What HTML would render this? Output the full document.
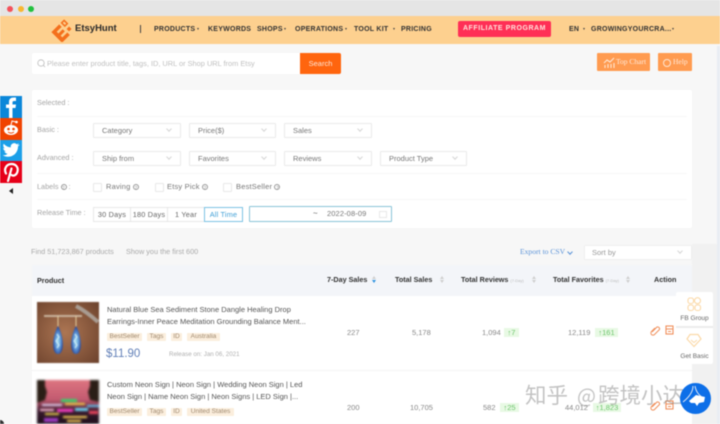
<!DOCTYPE html>
<html><head><meta charset="utf-8"><style>
html,body{margin:0;padding:0}
body{width:720px;height:424px;overflow:hidden;position:relative;background:#f7f7f7;font-family:"Liberation Sans","Noto Sans CJK SC",sans-serif;color:#666}
#w{position:absolute;left:0;top:0;width:720px;height:424px;overflow:hidden;filter:blur(.45px)}
.a{position:absolute;white-space:nowrap}
.n{font-size:7px;font-weight:700;color:#333;letter-spacing:.25px;top:25px;line-height:9px}
.k{position:absolute;top:28px;width:0;height:0;border-left:1.5px solid transparent;border-right:1.5px solid transparent;border-top:2px solid #444}
.s{position:absolute;background:#fff;border:1px solid #ebebeb;box-sizing:border-box;font-size:7.5px;color:#777;padding-left:8px;height:15px;line-height:13px;border-radius:1px}
.s:after{content:"";position:absolute;right:9px;top:3px;width:3px;height:3px;border-right:1px solid #d5d5d5;border-bottom:1px solid #d5d5d5;transform:rotate(45deg)}
.l{position:absolute;font-size:7.3px;color:#a5a5a5;left:37px;white-space:nowrap;line-height:10px}
.c{position:absolute;width:7px;height:7px;border:1px solid #e8e8e8;background:#fff;top:183px;border-radius:1px}
.t{font-size:7.5px;color:#777;top:182px;line-height:10px;letter-spacing:.2px}
.q{display:inline-block;box-sizing:border-box;width:6px;height:6px;border:.7px solid #999;border-radius:50%;font-size:4.5px;line-height:5px;text-align:center;color:#888;letter-spacing:0;vertical-align:0}
.b{position:absolute;top:207px;height:15px;box-sizing:border-box;border:1px solid #e8e8e8;background:#fff;font-size:7.3px;line-height:13px;text-align:center;color:#666;letter-spacing:.2px}
.h{font-size:7.2px;font-weight:700;color:#333;top:275px;line-height:10px}
.m{font-size:4px;color:#bbb;font-weight:400}
.p{font-size:7.5px;color:#555;left:107px;line-height:10px}
.g{position:absolute;height:8px;line-height:8px;background:#fbeedd;color:#a08a70;font-size:6.6px;text-align:center;border-radius:1px}
.v{font-size:7.5px;color:#888;line-height:10px}
.u{position:absolute;background:#e8f9e4;color:#6cc56c;font-size:7.5px;height:9px;line-height:9px;text-align:center}
.sort{position:absolute;width:4px;height:7px}
.sort:before,.sort:after{content:"";position:absolute;left:0;border-left:2px solid transparent;border-right:2px solid transparent}
.sort:before{top:0;border-bottom:3px solid #cfcfcf}
.sort:after{bottom:0;border-top:3px solid #cfcfcf}
</style></head><body><div id="w">

<div class="a" style="left:0;top:0;width:720px;height:16px;background:#e5e5e5"></div>
<div class="a" style="left:7px;top:6px;width:6px;height:6px;border-radius:50%;background:#f4515b"></div>
<div class="a" style="left:18px;top:6px;width:6px;height:6px;border-radius:50%;background:#f9b731"></div>
<div class="a" style="left:28px;top:6px;width:6px;height:6px;border-radius:50%;background:#22c13f"></div>

<div class="a" style="left:0;top:16px;width:720px;height:28px;background:#fdd08f"></div>
<svg class="a" style="left:49px;top:17px" width="26" height="25" viewBox="0 0 26 25">
<g transform="rotate(-45 13 13)" fill="#f4701c"><path d="M4 7h11v3.500H8v2.500h6v3h-6v2.500h7V22H4z"/><path d="M17 7h5v6h-5z M18.500 8.500v3h2v-3z" fill-rule="evenodd"/><rect x="17" y="15.500" width="3.500" height="3.500"/></g>
</svg>
<div class="a" style="left:75px;top:22px;font-size:9.5px;font-weight:700;color:#2b2b2b;line-height:14px">EtsyHunt</div>
<div class="a" style="left:140px;top:25px;width:1px;height:8px;background:#444"></div>
<div class="a n" style="left:154px">PRODUCTS</div><i class="k" style="left:197px"></i>
<div class="a n" style="left:208px">KEYWORDS</div>
<div class="a n" style="left:257px">SHOPS</div><i class="k" style="left:284px"></i>
<div class="a n" style="left:295px">OPERATIONS</div><i class="k" style="left:345px"></i>
<div class="a n" style="left:354px">TOOL KIT</div><i class="k" style="left:393px"></i>
<div class="a n" style="left:401px">PRICING</div>
<div class="a" style="left:458px;top:21px;width:93px;height:16px;background:#ff2f56;border-radius:2px;color:#ffe3dc;font-size:7px;font-weight:700;line-height:16px;text-align:center;letter-spacing:.55px">AFFILIATE PROGRAM</div>
<div class="a n" style="left:569px">EN</div><i class="k" style="left:583px"></i>
<div class="a n" style="left:591px">GROWINGYOURCRA...</div><i class="k" style="left:672px"></i>

<div class="a" style="left:32px;top:53px;width:268px;height:21px;background:#fff;border-radius:2px 0 0 2px"></div>
<svg class="a" style="left:36px;top:58px" width="10" height="10" viewBox="0 0 10 10"><circle cx="5" cy="5" r="3.2" fill="none" stroke="#bbb" stroke-width=".8"/><path d="M7.4 7.4L9 9" stroke="#bbb" stroke-width=".8"/></svg>
<div class="a" style="left:47px;top:59px;font-size:7.4px;color:#c0c0c0;line-height:10px">Please enter product title, tags, ID, URL or Shop URL from Etsy</div>
<div class="a" style="left:300px;top:53px;width:41px;height:21px;background:#ff650e;border-radius:0 2px 2px 0;color:#ffe7d8;font-size:7.5px;line-height:21px;text-align:center">Search</div>

<div class="a" style="left:597px;top:53px;width:53px;height:18px;background:#ff9b50;border-radius:1px;color:#ffeadb;font:7.5px/18px 'Liberation Serif',serif"><span style="position:absolute;left:19px">Top Chart</span></div>
<svg class="a" style="left:603px;top:57px" width="12" height="11" viewBox="0 0 12 11"><path d="M2 8v3M5 7v4M8 7v4M11 6v5M1 6l3-3 3 2 4-4" stroke="#ffe6d2" stroke-width="1.1" fill="none"/></svg>
<div class="a" style="left:658px;top:53px;width:34px;height:18px;background:#ff9b50;border-radius:1px;color:#ffeadb;font:7.5px/18px 'Liberation Serif',serif"><span style="position:absolute;left:15px">Help</span></div>
<div class="a" style="left:663px;top:59px;box-sizing:border-box;width:8px;height:8px;border:1px solid #ffe6d2;border-radius:50%"></div>

<div class="a" style="left:32px;top:90px;width:660px;height:138px;background:#fff;border-radius:2px"></div>
<div class="l" style="top:98px">Selected :</div>
<div class="l" style="top:125px">Basic :</div>
<div class="l" style="top:153px">Advanced :</div>
<div class="l" style="top:182px">Labels <span class="q">?</span> :</div>
<div class="l" style="top:208px">Release Time :</div>
<div class="a" style="left:37px;top:116px;width:650px;height:1px;background:#f7f7f7"></div>
<div class="a" style="left:37px;top:173px;width:650px;height:1px;background:#f7f7f7"></div>
<div class="a" style="left:37px;top:199px;width:650px;height:1px;background:#f7f7f7"></div>

<div class="s" style="left:93px;top:123px;width:88px">Category</div>
<div class="s" style="left:189px;top:123px;width:87px">Price($)</div>
<div class="s" style="left:284px;top:123px;width:88px">Sales</div>
<div class="s" style="left:93px;top:151px;width:88px">Ship from</div>
<div class="s" style="left:189px;top:151px;width:87px">Favorites</div>
<div class="s" style="left:284px;top:151px;width:88px">Reviews</div>
<div class="s" style="left:380px;top:151px;width:87px">Product Type</div>

<div class="c" style="left:93px"></div><div class="a t" style="left:106px">Raving <span class="q">?</span></div>
<div class="c" style="left:155px"></div><div class="a t" style="left:167px">Etsy Pick <span class="q">?</span></div>
<div class="c" style="left:223px"></div><div class="a t" style="left:236px">BestSeller <span class="q">?</span></div>

<div class="b" style="left:93px;width:38px">30 Days</div>
<div class="b" style="left:130px;width:38px">180 Days</div>
<div class="b" style="left:167px;width:38px">1 Year</div>
<div class="b" style="left:204px;width:39px;border-color:#7cc3e4;color:#3f9fd6">All Time</div>
<div class="a" style="left:249px;top:206px;width:143px;height:16px;box-sizing:border-box;border:1px solid #8ac4d8;border-radius:1px;background:#fff"></div>
<div class="a" style="left:313px;top:209px;font-size:8px;color:#666;line-height:10px">~</div>
<div class="a" style="left:327px;top:209px;font-size:7.5px;color:#777;line-height:10px;letter-spacing:.1px">2022-08-09</div>
<div class="a" style="left:379px;top:211px;width:6px;height:5px;border:1px solid #e8e8e8"></div>

<div class="a" style="left:31px;top:247px;font-size:7.3px;color:#aaa;line-height:10px">Find 51,723,867 products</div>
<div class="a" style="left:126px;top:247px;font-size:7.3px;color:#aaa;line-height:10px">Show you the first 600</div>
<div class="a" style="left:520px;top:247px;font:7.6px/10px 'Liberation Serif',serif;color:#5b93d8">Export to CSV</div>
<div class="a" style="left:568px;top:250px;width:3px;height:3px;border-right:1px solid #5b93d8;border-bottom:1px solid #5b93d8;transform:rotate(45deg)"></div>
<div class="s" style="left:584px;top:245px;width:108px;padding-left:7px;border-color:#efefef;color:#999">Sort by</div>

<div class="a" style="left:692px;top:244px;width:25px;height:180px;background:#f1f1f1"></div>
<div class="a" style="left:717px;top:46px;width:3px;height:378px;background:#e9edf3"></div>

<div class="a" style="left:32px;top:265px;width:660px;height:31px;background:#f3f5f9;border-radius:2px 2px 0 0"></div>
<div class="a" style="left:32px;top:296px;width:660px;height:128px;background:#fff"></div>
<div class="a" style="left:32px;top:370px;width:660px;height:1px;background:#f4f4f4"></div>
<div class="a h" style="left:37px;top:276px">Product</div>
<div class="a h" style="left:327px">7-Day Sales</div>
<div class="a" style="left:372px;top:276px;width:0;height:0;border-left:2px solid transparent;border-right:2px solid transparent;border-bottom:3px solid #cfcfcf"></div>
<div class="a" style="left:372px;top:280px;width:0;height:0;border-left:2px solid transparent;border-right:2px solid transparent;border-top:3px solid #2f94e0"></div>
<div class="a h" style="left:395px">Total Sales</div><div class="sort" style="left:440px;top:276px"></div>
<div class="a h" style="left:461px">Total Reviews <span class="m">(7-Day)</span></div><div class="sort" style="left:532px;top:276px"></div>
<div class="a h" style="left:553px">Total Favorites <span class="m">(7-Day)</span></div><div class="sort" style="left:626px;top:276px"></div>
<div class="a h" style="left:654px;top:275px">Action</div>

<svg class="a" style="left:37px;top:302px;filter:blur(.5px)" width="62" height="61" viewBox="0 0 62 61">
<defs><radialGradient id="e" cx=".45" cy=".5" r=".75"><stop offset="0" stop-color="#ad7653"/><stop offset="1" stop-color="#6b412c"/></radialGradient>
<radialGradient id="d" cx=".5" cy=".55" r=".6"><stop offset="0" stop-color="#a4e0f0"/><stop offset=".5" stop-color="#5a92d4"/><stop offset="1" stop-color="#172a80"/></radialGradient></defs>
<rect width="62" height="61" fill="url(#e)"/>
<path d="M7 14 L45 14" stroke="#c9b29c" stroke-width="2"/>
<path d="M39 4 Q50 10 61 20" stroke="#a99c92" stroke-width="4" fill="none"/>
<path d="M21 14V26M39 14V26" stroke="#e6cfa0" stroke-width="1"/>
<path d="M21 24 C15 34 14 52 21 52 C28 52 27 34 21 24Z" fill="url(#d)"/>
<path d="M39 24 C33 34 32 52 39 52 C46 52 45 34 39 24Z" fill="url(#d)"/>
<path d="M20 32l2 3-3 4 3 4-2 3M38 32l2 3-3 4 3 4-2 3" stroke="#d4f0f8" stroke-width="1.2" fill="none"/>
</svg>
<svg class="a" style="left:37px;top:380px;filter:blur(1px)" width="62" height="44" viewBox="0 0 62 44">
<defs><linearGradient id="n" x1="0" y1="0" x2="0" y2="1"><stop offset="0" stop-color="#dd7480"/><stop offset=".45" stop-color="#c25a70"/><stop offset=".7" stop-color="#3a1a2e"/><stop offset="1" stop-color="#1c0e1a"/></linearGradient></defs>
<rect width="62" height="44" fill="url(#n)"/>
<path d="M0 0h8v6l2 6-2 8-8 3zM62 0h-9v6l-2 6 2 8 9 2z" fill="#2a1e16"/>
<rect x="24" y="19" width="16" height="3" fill="#3bd06a"/><rect x="5" y="24" width="20" height="2" fill="#e0cdee"/><rect x="28" y="23" width="20" height="2" fill="#f6cf4a"/><rect x="50" y="25" width="12" height="2" fill="#5cc0ee"/>
<rect x="20" y="29" width="16" height="3" fill="#f03cc0"/><rect x="38" y="28" width="13" height="3" fill="#6cd0f0"/><rect x="3" y="29" width="14" height="2" fill="#ffc0d8"/><rect x="8" y="33" width="14" height="2" fill="#e6d050"/><rect x="52" y="31" width="9" height="3" fill="#f0455e"/>
<rect x="7" y="38" width="14" height="4" fill="#9a3bc0"/><rect x="26" y="36" width="24" height="2" fill="#ffd55a"/><rect x="30" y="40" width="14" height="2" fill="#ffd55a"/>
</svg>

<div class="a p" style="top:305px">Natural Blue Sea Sediment Stone Dangle Healing Drop</div>
<div class="a p" style="top:317px">Earrings-Inner Peace Meditation Grounding Balance Ment...</div>
<div class="g a" style="left:107px;top:333px;width:35px">BestSeller</div><div class="g a" style="left:147px;top:333px;width:19px">Tags</div><div class="g a" style="left:171px;top:333px;width:11px">ID</div><div class="g a" style="left:187px;top:333px;width:33px">Australia</div>
<div class="a" style="left:106px;top:347px;font-size:11.5px;color:#6381b8;line-height:14px">$11.90</div>
<div class="a" style="left:169px;top:351px;font-size:6.2px;color:#b0b0b0;line-height:8px">Release on: Jan 06, 2021</div>

<div class="a p" style="top:380px">Custom Neon Sign | Neon Sign | Wedding Neon Sign | Led</div>
<div class="a p" style="top:392px">Neon Sign | Name Neon Sign | Neon Signs | LED Sign |...</div>
<div class="g a" style="left:107px;top:408px;width:35px">BestSeller</div><div class="g a" style="left:147px;top:408px;width:19px">Tags</div><div class="g a" style="left:171px;top:408px;width:11px">ID</div><div class="g a" style="left:187px;top:408px;width:47px">United States</div>

<div class="a v" style="left:347px;top:328px">227</div>
<div class="a v" style="left:412px;top:328px">5,178</div>
<div class="a v" style="left:482px;top:328px">1,094</div>
<div class="u" style="left:504px;top:328px;width:15px">&#8593;7</div>
<div class="a v" style="left:568px;top:328px">12,119</div>
<div class="u" style="left:595px;top:328px;width:23px">&#8593;161</div>
<div class="a v" style="left:347px;top:403px">200</div>
<div class="a v" style="left:410px;top:403px">10,705</div>
<div class="a v" style="left:483px;top:403px">582</div>
<div class="u" style="left:500px;top:403px;width:19px">&#8593;25</div>
<div class="a v" style="left:565px;top:403px">44,012</div>
<div class="u" style="left:593px;top:403px;width:28px">&#8593;1,823</div>

<svg class="a" style="left:649px;top:325px" width="28" height="11" viewBox="0 0 28 11"><path d="M3 7l5-5a2 2 0 0 1 2.500 2.500l-5 5a2 2 0 0 1-3-3l3.500-3.500" fill="none" stroke="#f0905c" stroke-width="1"/><rect x="17" y="1" width="7" height="8" fill="none" stroke="#f0905c" stroke-width="1.1"/><path d="M17 4h7M19 6.500h3" stroke="#f0905c"/></svg>
<svg class="a" style="left:649px;top:400px" width="28" height="11" viewBox="0 0 28 11"><path d="M3 7l5-5a2 2 0 0 1 2.500 2.500l-5 5a2 2 0 0 1-3-3l3.500-3.500" fill="none" stroke="#f0905c" stroke-width="1"/><rect x="17" y="1" width="7" height="8" fill="none" stroke="#f0905c" stroke-width="1.1"/><path d="M17 4h7M19 6.500h3" stroke="#f0905c"/></svg>

<div class="a" style="left:676px;top:292px;width:37px;height:72px;background:#fff;border-radius:2px"></div>
<div class="a" style="left:676px;top:326px;width:37px;height:2px;background:#ececec"></div>
<svg class="a" style="left:687px;top:296px" width="15" height="16" viewBox="0 0 15 16"><g fill="none" stroke="#fbd9a8" stroke-width="1.1"><rect x="1" y="2" width="5.500" height="5.500" rx="2"/><circle cx="10.500" cy="4.700" r="3"/><rect x="1" y="9" width="5.500" height="5.500" rx="2"/><rect x="8" y="9" width="5.500" height="5.500" rx="2"/></g></svg>
<svg class="a" style="left:686px;top:333px" width="16" height="15" viewBox="0 0 16 15"><path d="M4 1.500h8l3 4.500-7 7.500L1 6z" fill="none" stroke="#fbd9a8" stroke-width="1.2"/><path d="M5 7l3 2.500L11 7" fill="none" stroke="#fbd9a8"/></svg>
<div class="a" style="left:676px;top:314px;width:37px;text-align:center;font-size:6.5px;color:#666;line-height:9px">FB Group</div>
<div class="a" style="left:676px;top:352px;width:37px;text-align:center;font-size:6.5px;color:#666;line-height:9px">Get Basic</div>

<div class="a" style="left:0;top:96px;width:22px;height:22px;background:#0b87d9"></div>
<svg class="a" style="left:0;top:96px" width="22" height="22" viewBox="0 0 22 22"><path d="M9 22V12H6V8.500h3V6c0-3 1.800-4.500 4.500-4.500H16V5h-2c-1 0-1.500.5-1.500 1.500v2H16l-.5 3.500h-3v10z" fill="#fff"/></svg>
<div class="a" style="left:0;top:118px;width:22px;height:22px;background:#f04300"></div>
<svg class="a" style="left:2px;top:119px" width="18" height="18" viewBox="0 0 18 18"><ellipse cx="9" cy="11" rx="7" ry="5" fill="#fff"/><path d="M9 6L10 2l4 1" stroke="#fff" fill="none"/><circle cx="14.500" cy="3" r="1.300" fill="#fff"/><circle cx="6.500" cy="10" r="1.300" fill="#f04300"/><circle cx="11.500" cy="10" r="1.300" fill="#f04300"/><path d="M6 13c2 1.500 4 1.500 6 0" stroke="#f04300" fill="none"/></svg>
<div class="a" style="left:0;top:140px;width:22px;height:21px;background:#1c9fe8"></div>
<svg class="a" style="left:2px;top:141px" width="18" height="18" viewBox="0 0 24 24"><path fill="#fff" d="M23 5c-.8.400-1.700.600-2.600.700.900-.600 1.600-1.400 2-2.500-.900.500-1.900.900-2.900 1.100a4.600 4.600 0 0 0-7.800 4.200C8 8.300 4.600 6.500 2.300 3.700c-1.200 2.100-.600 4.800 1.400 6.100-.700 0-1.400-.200-2.100-.600 0 2.200 1.600 4.100 3.700 4.600-.700.200-1.400.200-2.100.100.600 1.800 2.300 3.100 4.300 3.200A9.300 9.300 0 0 1 1 19c2.100 1.300 4.500 2 7.100 2 8.600 0 13.500-7.300 13.200-13.800.900-.700 1.700-1.400 2.300-2.200z"/></svg>
<div class="a" style="left:0;top:161px;width:22px;height:22px;background:#e60019"></div>
<svg class="a" style="left:0;top:161px" width="22" height="22" viewBox="0 0 22 22"><path d="M6 12.500C3.500 8 6.500 3 11.500 3c4.500 0 7 3.500 6 7.500-.8 3.500-4 5-6 3.500M11.500 7.500L8 20" fill="none" stroke="#fff" stroke-width="2.200" stroke-linecap="round"/></svg>
<div class="a" style="left:9px;top:188px;width:0;height:0;border-top:3px solid transparent;border-bottom:3px solid transparent;border-right:4px solid #222"></div>
<div class="a" style="left:0;top:420px;width:4px;height:4px;background:#333;border-radius:0 4px 0 0"></div>

<div class="a" style="left:525px;top:381px;font:21.5px/28px 'Noto Sans CJK SC',sans-serif;color:rgba(135,135,135,.5)">知乎</div>
<div class="a" style="left:577px;top:381px;font:20px/28px 'Noto Sans CJK SC',sans-serif;color:rgba(135,135,135,.5)">@</div>
<div class="a" style="left:598px;top:381px;font:21.5px/28px 'Noto Sans CJK SC',sans-serif;color:rgba(135,135,135,.5)">跨境小达人</div>

<div class="a" style="left:680px;top:383px;width:31px;height:31px;border-radius:50%;background:#0d6fe8"></div>
<svg class="a" style="left:680px;top:383px" width="31" height="31" viewBox="0 0 31 31"><path d="M13 3C13 10 8 15 3 19M15 3C16 9 19 12 23 15" fill="none" stroke="#dfe8f5" stroke-width="1"/><path d="M9 18l7-6 9 2-1 5-5 1-2 3-2-3-4 0z" fill="#fff"/></svg>
</div></body></html>
